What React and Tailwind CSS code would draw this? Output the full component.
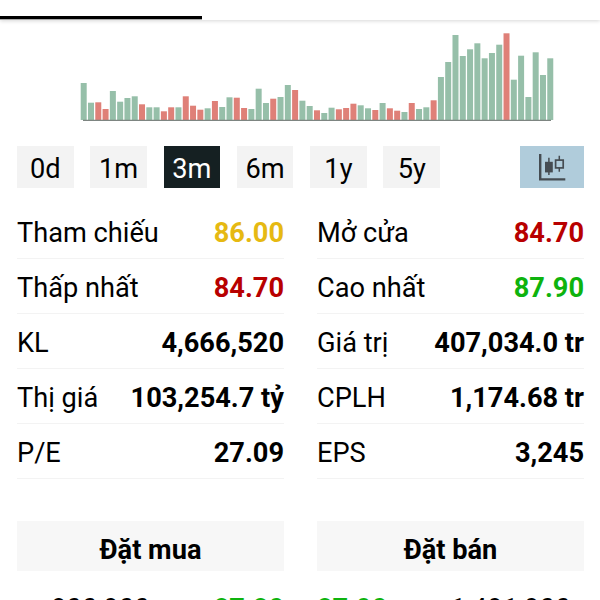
import React, { useState } from "react";

// [height, direction] for each trading session
const volumes = [
  [37, "u"], [17.3, "u"], [17.7, "d"], [11, "d"], [29, "u"], [18.3, "u"], [22, "u"], [23.7, "u"],
  [15.7, "d"], [12.7, "u"], [12.7, "u"], [8.7, "d"], [12.7, "d"], [12.7, "u"], [23.7, "d"], [14.3, "d"],
  [10.3, "d"], [11.7, "u"], [19, "d"], [13, "u"], [22.7, "u"], [22.3, "d"], [12, "d"], [11, "u"],
  [31.3, "u"], [17, "u"], [21.3, "d"], [23, "u"], [35, "u"], [30, "d"], [19.3, "u"], [14, "u"],
  [9.7, "d"], [7, "u"], [12.3, "u"], [10.7, "d"], [12, "d"], [16.3, "d"], [14.7, "u"], [11.7, "u"],
  [10, "d"], [17, "u"], [11.7, "d"], [9.3, "d"], [8, "u"], [17, "d"], [11, "u"], [12.7, "u"],
  [19.7, "d"], [43, "u"], [58, "u"], [85, "u"], [64, "u"], [70.7, "u"], [76.7, "u"], [61.7, "u"],
  [67, "u"], [75.3, "u"], [86.7, "d"], [40.3, "u"], [64.3, "u"], [23, "u"], [67.7, "u"], [45, "u"],
  [61.7, "u"],
];

const ranges = ["0d", "1m", "3m", "6m", "1y", "5y"];

const stats = [
  { label: "Tham chiếu", value: "86.00", color: "text-[#e6b912]" },
  { label: "Mở cửa", value: "84.70", color: "text-[#b80000]" },
  { label: "Thấp nhất", value: "84.70", color: "text-[#b80000]" },
  { label: "Cao nhất", value: "87.90", color: "text-[#0eb30e]" },
  { label: "KL", value: "4,666,520", color: "text-black" },
  { label: "Giá trị", value: "407,034.0 tr", color: "text-black" },
  { label: "Thị giá", value: "103,254.7 tỷ", color: "text-black" },
  { label: "CPLH", value: "1,174.68 tr", color: "text-black" },
  { label: "P/E", value: "27.09", color: "text-black" },
  { label: "EPS", value: "3,245", color: "text-black" },
];

function VolumeChart() {
  return (
    <svg width="600" height="126" viewBox="0 0 600 126" className="block">
      {volumes.map(([h, dir], i) => (
        <rect
          key={i}
          x={80.7 + i * 7.29}
          y={100 - h}
          width="6"
          height={h}
          fill={dir === "u" ? "#96bfa9" : "#df8078"}
        />
      ))}
      <path d="M83 100.4H551" stroke="#7d8581" strokeWidth="1.2" />
    </svg>
  );
}

function CandleIcon() {
  return (
    <svg width="28" height="28" viewBox="0 0 28 28" fill="none" stroke="#454c52">
      <path d="M2.2 1V26.4H27.3" strokeWidth="2.4" />
      <path d="M10.9 4.8V22M21.3 2.7V18.7" strokeWidth="1.5" />
      <rect x="7" y="8.8" width="7.8" height="10.6" fill="#454c52" stroke="none" />
      <rect x="17.6" y="7.1" width="7.6" height="7.8" fill="#b0ccdb" strokeWidth="1.7" />
    </svg>
  );
}

export default function App() {
  const [range, setRange] = useState("3m");

  return (
    <div className="w-[600px] h-[600px] overflow-hidden bg-white text-black text-[27.2px] leading-8 font-['Roboto',sans-serif]">
      <div className="h-5 flex items-end shadow-[0_1px_4px_rgba(0,0,0,0.16)]">
        <div className="w-[202px] h-1 bg-black border-b border-[#aaa]" />
      </div>

      <VolumeChart />

      <div className="flex items-center justify-between pl-[17px] pr-4">
        <div className="flex gap-[16.8px]">
          {ranges.map((r) => (
            <button
              key={r}
              onClick={() => setRange(r)}
              className={`w-[56.5px] h-[42px] pt-[3px] ${r === range ? "bg-[#152022] text-white" : "bg-[#f3f3f3]"}`}
            >
              {r}
            </button>
          ))}
        </div>
        <button className="w-16 h-[42px] flex items-center justify-center bg-[#b0ccdb]">
          <CandleIcon />
        </button>
      </div>

      <div className="grid grid-cols-2 gap-x-[33px] pl-[17px] pr-4 mt-4">
        {stats.map((s) => (
          <div key={s.label} className="h-[55px] pt-1 flex items-center justify-between border-b border-[#f3f3f3] whitespace-nowrap">
            <span>{s.label}</span>
            <span className={`font-bold ${s.color}`}>{s.value}</span>
          </div>
        ))}
      </div>

      <div className="grid grid-cols-2 gap-x-[33px] pl-[17px] pr-4 mt-[42px]">
        <div className="h-[50px] flex items-center justify-center pt-[7px] bg-[#f7f7f7] font-bold">Đặt mua</div>
        <div className="h-[50px] flex items-center justify-center pt-[7px] bg-[#f7f7f7] font-bold">Đặt bán</div>
      </div>

      <div className="grid grid-cols-2 gap-x-[33px] pl-[17px] pr-4 mt-[22px]">
        <div className="flex justify-between pl-[34px]">
          <span className="tracking-[0.3px]">800,900</span>
          <span className="font-bold text-[#0eb30e]">87.80</span>
        </div>
        <div className="flex justify-between pr-[13px]">
          <span className="font-bold text-[#0eb30e]">87.90</span>
          <span className="tracking-[0.3px]">1,491,900</span>
        </div>
      </div>
    </div>
  );
}
